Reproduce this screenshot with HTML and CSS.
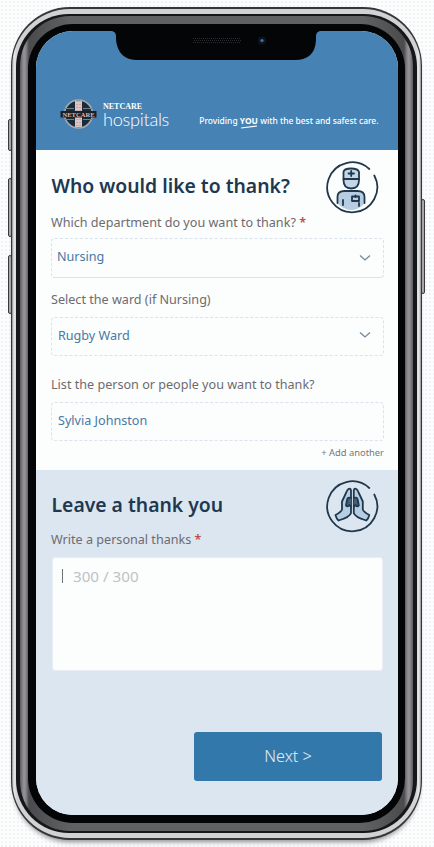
FILE: index.html
```html
<!DOCTYPE html>
<html lang="en">
<head>
<meta charset="utf-8">
<title>Netcare Hospitals</title>
<link rel="stylesheet" href="styles.css">
</head>
<body>
<div class="stage">
  <span class="key key-mute"></span>
  <span class="key key-up"></span>
  <span class="key key-down"></span>
  <span class="key key-power"></span>
  <div class="phone">
    <div class="steel"><div class="groove"><div class="band"><div class="bezel">
      <main class="screen">
        <svg class="notch" viewBox="0 0 208 30" width="208" height="30">
          <path d="M0 0H208Q204 1 204 5V9Q203 29 183 29H24Q6 28 4 9V5Q4 1 0 0Z" fill="#040506"/>
          <g stroke="#292d30" stroke-width="1" stroke-dasharray="1 1"><path d="M81 7.500H129M82 9.500H129M81 11.500H129"/></g>
          <circle cx="150" cy="9.500" r="4" fill="#0b1620"/><circle cx="150" cy="9.500" r="1.600" fill="#44709a"/>
        </svg>
        <header class="header">
          <div class="brand">
            <svg class="emblem" viewBox="0 0 38 32" width="38" height="32">
              <circle cx="19.500" cy="16" r="14" fill="#1b2b39" stroke="#a3abb0" stroke-width="1.600"/>
              <path d="M16 3H23V29H16Z" fill="#d9c5c3"/>
              <path d="M18 3V29M21 3V29" stroke="#a98784" stroke-dasharray="1 2"/>
              <path d="M6 10.500H15M24 10.500H33M6 21.500H15M24 21.500H33" stroke="#72808a"/>
              <rect x="1.500" y="13" width="36" height="6.500" fill="#1c2027"/>
              <text x="19.500" y="18.500" text-anchor="middle" textLength="32" class="emblem-text">NETCARE</text>
            </svg>
            <div class="wordmark"><span class="name">NETCARE</span><span class="kind">hospitals</span></div>
          </div>
          <p class="tagline">Providing <b>YOU<svg viewBox="0 0 18 4" width="18" height="4"><path d="M1 3L17 1" stroke="#fff" stroke-width="1.200"/></svg></b> with the best and safest care.</p>
        </header>
        <section class="recipient">
          <div class="title-row">
            <h1>Who would like to thank?</h1>
            <svg class="badge" viewBox="0 0 54 54" width="54" height="54" fill="none" stroke="#21374b" stroke-width="1.800" stroke-linecap="round" stroke-linejoin="round">
              <path d="M43.300 9A25 25 0 1 0 48.300 15.500"/>
              <path d="M12 44V38Q12 31 19 31H31Q38 31 38 38V44Q26 56 12 44Z" fill="#b7cee2" stroke="none"/>
              <path d="M17.500 12Q18 8.500 25 8.500Q32 8.500 33 12V20Q33 28.500 25.300 28.500Q17.500 28.500 17.500 20Z" fill="#c4d7e8"/>
              <path d="M17.500 19H33M25.200 11V16M22.500 13.500H28M11.500 43V37Q11.500 31 18.500 31H31.500Q38.500 31 38.500 37V43M17 40V45M33 43V46"/>
              <path d="M26 36.500H33V41H26ZM29.500 35.500V37"/>
            </svg>
          </div>
          <label class="label label-dept">Which department do you want to thank? <i>*</i></label>
          <div class="field field-dept"><span>Nursing</span><svg width="12" height="8" viewBox="0 0 12 8"><path d="M1 1.500L6 6L11 1.500"/></svg></div>
          <label class="label label-ward">Select the ward (if Nursing)</label>
          <div class="field field-ward"><span>Rugby Ward</span><svg width="12" height="8" viewBox="0 0 12 8"><path d="M1 1.500L6 6L11 1.500"/></svg></div>
          <label class="label label-person">List the person or people you want to thank?</label>
          <div class="field field-person"><span>Sylvia Johnston</span></div>
          <a class="add">+ Add another</a>
        </section>
        <section class="message">
          <div class="title-row">
            <h2>Leave a thank you</h2>
            <svg class="badge" viewBox="0 0 54 54" width="54" height="54" fill="none" stroke="#21374b" stroke-width="1.800" stroke-linecap="round" stroke-linejoin="round">
              <path d="M43.300 9A25 25 0 1 0 48.300 15.500"/>
              <g id="hand" fill="#b5cee3">
                <path d="M25 11.500Q24.500 9 22.500 10Q21 11 20 14L16 22.500V30.500Q15 33 9.500 36Q10.500 40 12.500 41.500Q24 38 25 34Z"/>
                <path d="M25 19Q21.500 17.500 21 21L20 26.500Q21.500 28.500 23.500 26L25 27.500" fill="#41607b"/>
              </g>
              <use href="#hand" transform="translate(52.800 0) scale(-1 1)"/>
            </svg>
          </div>
          <label class="label label-note">Write a personal thanks <i>*</i></label>
          <div class="note"><span class="caret"></span><span>300 / 300</span></div>
          <button class="next">Next &gt;</button>
        </section>
      </main>
    </div></div></div></div>
  </div>
</div>
</body>
</html>
```
FILE: styles.css
```css
* { box-sizing: border-box; }
body { margin: 0; background: #fcfdfd; font-family: "Noto Sans", sans-serif; }
.stage {
  position: relative;
  width: 434px;
  height: 847px;
  padding: 7px 12px 7px 11px;
  overflow: hidden;
  background-color: #fcfdfd;
  background-image: radial-gradient(circle, #d5dbde 0.5px, transparent 0.8px);
  background-size: 4px 4px;
}
.phone {
  position: relative;
  height: 833px;
  padding: 2px 1px;
  border-radius: 59px;
  background: #35363a;
  box-shadow: 0 5px 5px -3px #8d8e90;
}
.steel { height: 829px; padding: 5px 4px; border-radius: 58px; background: linear-gradient(90deg, #8c8c90, #e8e9eb 2px, #d2d2d5 5px, #d2d2d5 calc(100% - 5px), #e8e9eb calc(100% - 2px), #8c8c90); }
.groove { height: 819px; padding: 2px 4px; border-radius: 53px; background: #161719; }
.band { height: 815px; padding: 8px; border-radius: 50px; background: linear-gradient(90deg, #5c5c60, #98969a 4px, #858387 6px, #4b4b4e 9px, #606163 50px, #606163 calc(100% - 50px), #4b4b4e calc(100% - 9px), #858387 calc(100% - 6px), #98969a calc(100% - 4px), #5c5c60); }
.bezel { height: 799px; padding: 7px 7px 8px 8px; border-radius: 45px; background: #040506; }
.screen { position: relative; width: 362px; height: 784px; overflow: hidden; border-radius: 37px; background: #fcfdfd; }
.key { position: absolute; width: 4px; border: 1px solid #39393c; background: #aaa8ab; border-radius: 2px; }
.key-mute { left: 8px; top: 119px; height: 32px; }
.key-up { left: 8px; top: 178px; height: 59px; }
.key-down { left: 8px; top: 255px; height: 59px; }
.key-power { left: 421px; top: 199px; height: 95px; }
.notch { position: absolute; left: 76px; top: 0; }
.header { display: flex; height: 119px; padding: 67px 19.5px 0 23px; justify-content: space-between; background: #4682b4; color: #fff; }
.brand { display: flex; }
.emblem-text { font: bold 6.5px "Liberation Serif", serif; fill: #d7b9b1; }
.wordmark { display: flex; flex-direction: column; padding: 4px 0 0 6px; }
.name { font: bold 8px/9px "Liberation Serif", serif; white-space: nowrap; }
.kind { font: 300 18.2px/18px Lato, sans-serif; margin-top: -1px; letter-spacing: -0.3px; }
.tagline { margin: 17px 0 0; font-size: 8.45px; line-height: 12px; font-weight: 500; white-space: nowrap; }
.tagline b { position: relative; }
.tagline svg { position: absolute; left: 0; bottom: -3px; }
.recipient { height: 320px; padding: 10px 14px 0 15px; background: #fcfdfd; }
.message { height: 345px; padding: 9px 14px 0 15px; background-color: #dce6f0; }
.title-row { display: flex; justify-content: space-between; height: 54px; padding: 0 4px 0 0.5px; }
h1, h2 { margin: 13px 0 0; font-size: 19.35px; line-height: 26px; font-weight: 600; color: #20384f; white-space: nowrap; }
.badge { flex: none; }
.label { display: block; height: 18px; font-size: 12.6px; line-height: 18px; color: #6d6b70; white-space: nowrap; }
.label i { font-style: normal; font-weight: 600; color: #b5524b; }
.field { display: flex; width: 333px; height: 39px; padding: 0 12px 0 6px; align-items: center; justify-content: space-between; border: 1px dashed #dae2eb; border-radius: 4px; font-size: 12.6px; color: #4679a5; }
.field span { margin-top: -3px; }
.field svg { fill: none; stroke: #71899e; stroke-width: 1.3; }
.field-dept { height: 40px; margin-top: 6px; padding-left: 5px; border-bottom-style: solid; }
.label-ward { margin-top: 13px; }
.field-ward { margin-top: 8px; }
.field-ward svg { margin-top: -3px; }
.label-person { margin-top: 20px; }
.field-person { margin-top: 8px; }
.add { display: block; margin-top: 5px; text-align: right; font-size: 9.4px; line-height: 14px; color: #77777c; }
.label-note { margin-top: -2px; }
.note { display: flex; width: 331px; height: 114px; margin: 8px 0 0 1px; padding: 10px 9px; gap: 10px; border: 1px solid #e8eef3; border-radius: 3px; background: #fcfdfd; color: #bdc2c6; font-size: 15.2px; line-height: 16px; }
.caret { width: 1px; height: 14px; margin-top: 1px; background: #6b727a; }
.next { display: block; width: 188px; height: 49px; margin: 61px 2px 0 auto; padding: 0 0 2px; border: 0; border-radius: 3px; background: #3378ab; color: #e5eef5; font: 300 16.2px "Noto Sans", sans-serif; }
```
